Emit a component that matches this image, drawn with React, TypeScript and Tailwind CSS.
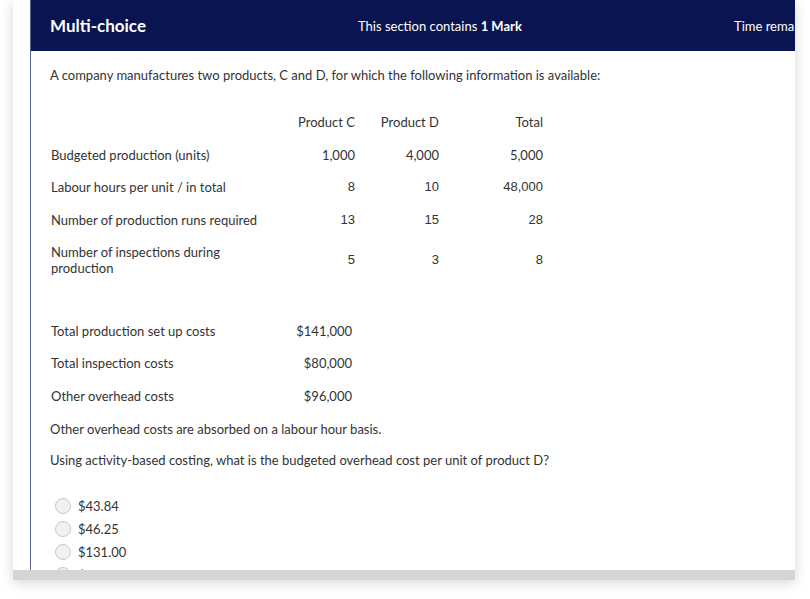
import React from "react";

const rows: { label: string; c: string; d: string; t: string; numFont: string }[] = [
  { label: "Budgeted production (units)", c: "1,000", d: "4,000", t: "5,000", numFont: "font-['Lato',sans-serif]" },
  { label: "Labour hours per unit / in total", c: "8", d: "10", t: "48,000", numFont: "font-['Liberation_Sans',Arial,sans-serif]" },
  { label: "Number of production runs required", c: "13", d: "15", t: "28", numFont: "font-['Liberation_Sans',Arial,sans-serif]" },
  { label: "Number of inspections during production", c: "5", d: "3", t: "8", numFont: "font-['Liberation_Sans',Arial,sans-serif]" },
];

const costs = [
  { label: "Total production set up costs", v: "$141,000" },
  { label: "Total inspection costs", v: "$80,000" },
  { label: "Other overhead costs", v: "$96,000" },
];

const options = ["$43.84", "$46.25", "$131.00", "$150.00"];

export default function App() {
  return (
    <div className="w-[810px] h-[599px] bg-white overflow-hidden font-['Lato',sans-serif] text-[13px] leading-[16px] text-[#333]">
      <div className="ml-[13px] w-[782px] h-[580px] flex flex-col shadow-[0_3px_12px_rgba(0,0,0,0.16)]">
        <div className="flex-1 min-h-0 overflow-hidden bg-white pl-[17px]">
          <div className="h-full border-l border-[#5b6596]">
            <div className="h-[51px] bg-[#0a1450] flex items-center pl-[19px] text-white overflow-hidden whitespace-nowrap">
              <div className="w-[308px] shrink-0 text-[17px] font-bold">Multi-choice</div>
              <div className="w-[376px] shrink-0 text-[13px]">
                This section contains <span className="font-bold">1 Mark</span>
              </div>
              <div className="shrink-0 text-[13px]">Time remaining</div>
            </div>

            <div className="pl-[19px] pt-[16px]">
              <p>A company manufactures two products, C and D, for which the following information is available:</p>

              <div className="mt-[23px] pl-px grid grid-cols-[220px_84px_84px_104px]">
                <div className="py-[8.25px]"></div>
                <div className="py-[8.25px] text-right">Product C</div>
                <div className="py-[8.25px] text-right">Product D</div>
                <div className="py-[8.25px] text-right">Total</div>
                {rows.map((r) => (
                  <React.Fragment key={r.label}>
                    <div className="py-[8.25px]">{r.label}</div>
                    <div className={`py-[8.25px] text-right self-center ${r.numFont}`}>{r.c}</div>
                    <div className={`py-[8.25px] text-right self-center ${r.numFont}`}>{r.d}</div>
                    <div className={`py-[8.25px] text-right self-center ${r.numFont}`}>{r.t}</div>
                  </React.Fragment>
                ))}
              </div>

              <div className="mt-[30px] pl-px grid grid-cols-[220px_81px]">
                {costs.map((c) => (
                  <React.Fragment key={c.label}>
                    <div className="py-[8.25px]">{c.label}</div>
                    <div className="py-[8.25px] text-right">{c.v}</div>
                  </React.Fragment>
                ))}
              </div>

              <p className="mt-[9px]">Other overhead costs are absorbed on a labour hour basis.</p>
              <p className="mt-[15px]">Using activity-based costing, what is the budgeted overhead cost per unit of product D?</p>

              <div className="mt-[26px] flex flex-col">
                {options.map((o) => (
                  <label key={o} className="h-[23px] flex items-center gap-[7px] pl-[5px]">
                    <span className="w-[16px] h-[16px] rounded-full border border-[#c8c8c8] bg-[#f1f1f1] shrink-0" />
                    <span>{o}</span>
                  </label>
                ))}
              </div>
            </div>
          </div>
        </div>
        <div className="h-[10px] bg-[#d5d5d5] shrink-0" />
      </div>
    </div>
  );
}
